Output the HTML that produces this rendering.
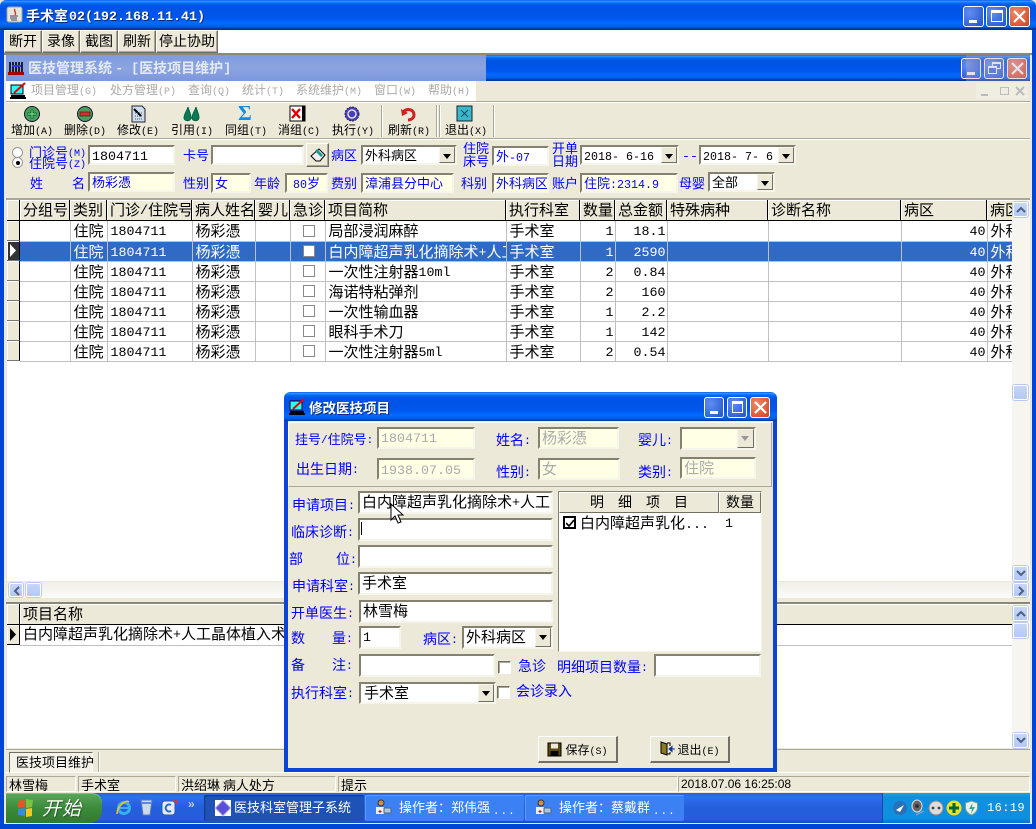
<!DOCTYPE html>
<html><head><meta charset="utf-8"><style>
html,body{margin:0;padding:0}
body{width:1036px;height:829px;overflow:hidden;position:relative;background:#ece9d8;font-family:"WenQuanYi Zen Hei","Noto Sans CJK SC",sans-serif;font-size:15px;color:#000}
body *{position:absolute;box-sizing:border-box;white-space:nowrap}
i{position:relative;top:2px;font-style:normal;font-family:"Liberation Mono",monospace;font-size:13.33px;vertical-align:top}
s{position:relative;top:3px;text-decoration:none;font-family:"Liberation Mono",monospace;font-size:10px;vertical-align:top}
.tb{background:linear-gradient(#0058ee 0,#3593ff 4%,#288eff 6%,#127dff 8%,#036ffc 10%,#0262ee 14%,#0057e5 20%,#0054e3 24%,#0055eb 56%,#005bf5 66%,#026afe 76%,#0062ef 86%,#0052d6 92%,#0040ab 94%,#003092 100%)}
.wb{width:21px;height:21px;border:1px solid #fff;border-radius:3px;background:radial-gradient(circle at 30% 30%,#5f8ff0,#2350d0)}
.wc{background:radial-gradient(circle at 30% 30%,#ec8a6a,#d4401c)}
.t{line-height:16px;height:16px}
.l{line-height:16px;height:16px;color:#00f}
.dl{font-size:14px}
.dl i{font-size:11.5px}
.btn{background:#ece9d8;border:1px solid;border-color:#fff #716f64 #716f64 #fff;box-shadow:inset -1px -1px 0 #aca899;text-align:center;line-height:21px;font-size:14px}
.f{border:2px solid;border-color:#858170 #f6f5ec #f6f5ec #858170;background:#fff;line-height:16px;padding:1px 0 0 2px;overflow:hidden}
.y{background:#ffffe6;color:#00f}
.d{background:#ffffe6;color:#aaa}
.ar{right:0;top:0;bottom:0;width:16px;background:#ece9d8;border:1px solid;border-color:#f6f5ec #716f64 #716f64 #f6f5ec}
.ar:after{content:"";position:absolute;left:3px;top:6px;border:4px solid transparent;border-top:5px solid #000;border-bottom:0}
.ar.g:after{border-top-color:#999}
.cb{width:13px;height:13px;border:1px solid;border-color:#716f64 #fff #fff #716f64;background:#fff;box-shadow:inset 1px 1px 0 #aca899}
.ti{font-size:12px;line-height:15px;height:15px}
.m{font-size:12px;color:#aaa;top:82px}
.tic{width:18px;height:18px}
.sep{width:2px;top:105px;height:32px;border-left:1px solid #aca899;border-right:1px solid #fff}
.hd{background:#ece9d8;top:200px;height:21px;line-height:19px;padding-left:3px;border-right:1px solid #000;border-bottom:1px solid #000;box-shadow:inset 1px 1px 0 #fff}
.ind{left:0;width:13px;height:20px;background:#ece9d8;border-right:1px solid #000;border-bottom:1px solid #777;box-shadow:inset 1px 1px 0 #fff}
table{border-collapse:collapse;table-layout:fixed;background:#fff}
tr,td,tbody,colgroup,col{position:static}
td{height:20px;padding:0 1px 0 3px;border-right:1px solid #c0c0c0;border-bottom:1px solid #c0c0c0;line-height:19px;overflow:hidden;box-sizing:border-box}
td.r{text-align:right}
tr.sel td{background:#316ac5;color:#fff}
.ckc{display:block;position:static;width:12px;height:12px;margin:0 auto;border:1px solid #888;background:#fff}
.sb{background:linear-gradient(#c8d6f8,#b4c8f6);border:1px solid #fff;border-radius:2px;box-shadow:0 0 0 1px #b9c9ef}
.st{top:776px;height:16px;border:1px solid;border-color:#aca899 #fff #fff #aca899;line-height:15px;font-size:13px;padding-left:2px;overflow:hidden}
.task{top:795px;height:26px;background:#3c81f3;border-radius:2px;color:#fff;line-height:24px;font-size:13px;padding-left:34px;box-shadow:inset 1px 1px 0 #5d9bf8}
.f13{font-size:13px}
.f13 i{font-size:11.67px}
</style></head><body>

<div class="tb" style="left:0;top:0;width:1036px;height:30px;border-radius:6px 6px 0 0"></div>
<div style="left:0;top:30px;width:4px;height:799px;background:#0046d5"></div>
<div style="left:1032px;top:30px;width:4px;height:799px;background:#0046d5"></div>
<div style="left:0;top:824px;width:1036px;height:5px;background:#0046d5"></div>
<svg style="left:6px;top:6px" width="17" height="18" viewBox="0 0 17 18"><rect x="1" y="1" width="15" height="15" rx="2" fill="#e7e5dc" stroke="#9aa"/><path d="M9 3c-2 2 2 3 0 6" stroke="#d33" stroke-width="1.4" fill="none"/><path d="M4 10h8M4 12h7M5 14h6" stroke="#446" stroke-width="1"/></svg>
<div class="t" style="left:26px;top:8px;color:#fff;font-weight:bold;font-size:14px;text-shadow:1px 1px 0 #0a2a80">手术室<i style="font-weight:bold;margin-left:1px">02(192.168.11.41)</i></div>
<div class="wb" style="left:963px;top:6px"><div style="left:5px;top:13px;width:8px;height:3px;background:#fff"></div></div>
<div class="wb" style="left:986px;top:6px"><div style="left:4px;top:3px;width:12px;height:12px;border:1px solid #fff;border-top-width:3px"></div></div>
<div class="wb wc" style="left:1009px;top:6px"><svg style="left:3px;top:3px" width="13" height="13"><path d="M1 1l11 11M12 1L1 12" stroke="#fff" stroke-width="2.2"/></svg></div>

<div style="left:4px;top:30px;width:1028px;height:23px;background:#fff"></div>
<div class="btn" style="left:4px;top:30px;width:38px;height:23px">断开</div>
<div class="btn" style="left:42px;top:30px;width:38px;height:23px">录像</div>
<div class="btn" style="left:80px;top:30px;width:38px;height:23px">截图</div>
<div class="btn" style="left:118px;top:30px;width:38px;height:23px">刷新</div>
<div class="btn" style="left:156px;top:30px;width:62px;height:23px">停止协助</div>

<div style="left:4px;top:53px;width:1028px;height:2px;background:#8a887c"></div>
<div class="tb" style="left:6px;top:55px;width:1024px;height:26px"></div>
<div style="left:6px;top:55px;width:480px;height:26px;background:linear-gradient(#7f9bdf,#8ba4e0 50%,#7c97de)"></div>
<svg style="left:8px;top:61px" width="16" height="14" viewBox="0 0 16 14"><rect x="0" y="11" width="16" height="3" fill="#a00"/><path d="M2 1v10M5 1v10M8 1v10M11 1v10M14 1v10" stroke="#000" stroke-width="1.6"/><path d="M4 5h9" stroke="#33f" stroke-width="2"/></svg>
<div class="t" style="left:28px;top:60px;color:#e4e9f6;font-weight:bold;font-size:14px">医技管理系统 <i style="font-weight:bold"> - [</i>医技项目维护<i style="font-weight:bold">]</i></div>
<div class="wb" style="left:961px;top:58px;width:20px"><div style="left:5px;top:13px;width:8px;height:3px;background:#fff"></div></div>
<div class="wb" style="left:984px;top:58px;width:20px"><div style="left:7px;top:3px;width:9px;height:7px;border:1px solid #fff;border-top-width:2px"></div><div style="left:3px;top:7px;width:9px;height:8px;border:1px solid #fff;border-top-width:2px;background:#3b68dc"></div></div>
<div class="wb wc" style="left:1007px;top:58px;width:20px"><svg style="left:3px;top:3px" width="13" height="13"><path d="M1 1l11 11M12 1L1 12" stroke="#fff" stroke-width="2.2"/></svg></div>
<div style="left:966px;top:55px;width:64px;height:26px;background:rgba(180,170,200,.35)"></div>

<!-- menu -->
<div style="left:6px;top:81px;width:470px;height:20px;background:#fff"></div>
<svg style="left:10px;top:82px" width="17" height="18" viewBox="0 0 17 18"><rect x="1" y="3" width="12" height="9" fill="#2ff" stroke="#000"/><path d="M4 11L15 1" stroke="#e00" stroke-width="2"/><path d="M1 14h14M0 16h16" stroke="#000" stroke-width="2"/></svg>
<div class="t m" style="left:31px">项目管理<s>(G)</s></div>
<div class="t m" style="left:110px">处方管理<s>(P)</s></div>
<div class="t m" style="left:188px">查询<s>(Q)</s></div>
<div class="t m" style="left:242px">统计<s>(T)</s></div>
<div class="t m" style="left:296px">系统维护<s>(M)</s></div>
<div class="t m" style="left:374px">窗口<s>(W)</s></div>
<div class="t m" style="left:428px">帮助<s>(H)</s></div>
<div style="left:976px;top:83px;width:52px;height:16px;background:#f0eee2"></div>
<div style="left:981px;top:94px;width:7px;height:2px;background:#bbb"></div>
<div style="left:1000px;top:87px;width:9px;height:8px;border:1px solid #bbb"></div>
<svg style="left:1015px;top:86px" width="10" height="10"><path d="M1 1l8 8M9 1L1 9" stroke="#bbb" stroke-width="2"/></svg>
<div style="left:6px;top:101px;width:1024px;height:2px;border-top:1px solid #aca899;border-bottom:1px solid #fff"></div>

<!-- toolbar -->
<svg class="tic" style="left:23px;top:105px" viewBox="0 0 18 18"><circle cx="9" cy="9" r="7.5" fill="#4aa05a" stroke="#113"/><path d="M9 4.5v9M4.5 9h9" stroke="#063" stroke-width="3"/><path d="M9 5v8M5 9h8" stroke="#9e9" stroke-width="1"/></svg>
<svg class="tic" style="left:76px;top:105px" viewBox="0 0 18 18"><circle cx="9" cy="9" r="7.5" fill="#4aa05a" stroke="#113"/><rect x="4" y="7" width="10" height="4" fill="#c33" stroke="#511" stroke-width=".7"/></svg>
<svg class="tic" style="left:129px;top:105px" viewBox="0 0 18 18"><path d="M3 1h10l3 3v13H3z" fill="#cde" stroke="#223"/><path d="M5 4l7 7" stroke="#000" stroke-width="2"/><path d="M6 8h8M6 11h8M6 14h8" stroke="#556" stroke-dasharray="1 1"/></svg>
<svg class="tic" style="left:183px;top:105px" viewBox="0 0 18 18"><path d="M5 2c-1 4-4 7-4 11 0 3 6 4 7 0 0-4-2-7-3-11zM13 2c-1 4-4 7-4 11 0 3 6 4 7 0 0-4-2-7-3-11z" fill="#0b7a55" stroke="#064"/></svg>
<div class="t" style="left:238px;top:102px;height:22px;font-size:21px;line-height:22px;color:#1a8ad8;font-weight:bold;font-family:'Liberation Serif',serif">Σ</div>
<svg class="tic" style="left:289px;top:105px" viewBox="0 0 18 18"><rect x="1" y="1" width="15" height="15" fill="#fff" stroke="#000"/><rect x="13" y="1" width="3" height="15" fill="#000"/><path d="M3 4l8 9M11 4l-8 9" stroke="#d00" stroke-width="2.4"/></svg>
<svg class="tic" style="left:343px;top:105px" viewBox="0 0 18 18"><circle cx="9" cy="9" r="7" fill="#4a3fb8" stroke="#225" stroke-dasharray="2 1"/><circle cx="9" cy="9" r="4" fill="none" stroke="#dde" stroke-width="1.5"/></svg>
<svg class="tic" style="left:400px;top:106px" viewBox="0 0 18 18"><path d="M3 6c4-4 11-3 11 3 0 3-3 5-6 5" fill="none" stroke="#c22" stroke-width="3"/><path d="M1 3l1 7 6-3z" fill="#c22"/></svg>
<svg class="tic" style="left:456px;top:105px" viewBox="0 0 18 18"><rect x="1" y="1" width="15" height="15" fill="#3bb8c8" stroke="#123"/><path d="M5 5l7 7M12 5l-7 7" stroke="#146" stroke-width="1"/></svg>
<div class="t ti" style="left:11px;top:122px">增加<s>(A)</s></div>
<div class="t ti" style="left:64px;top:122px">删除<s>(D)</s></div>
<div class="t ti" style="left:117px;top:122px">修改<s>(E)</s></div>
<div class="t ti" style="left:171px;top:122px">引用<s>(I)</s></div>
<div class="t ti" style="left:225px;top:122px">同组<s>(T)</s></div>
<div class="t ti" style="left:278px;top:122px">消组<s>(C)</s></div>
<div class="t ti" style="left:332px;top:122px">执行<s>(Y)</s></div>
<div class="sep" style="left:381px"></div>
<div class="t ti" style="left:388px;top:122px">刷新<s>(R)</s></div>
<div class="sep" style="left:436px"></div><div class="sep" style="left:439px"></div>
<div class="t ti" style="left:445px;top:122px">退出<s>(X)</s></div>
<div class="sep" style="left:493px"></div>
<div style="left:6px;top:138px;width:1024px;height:2px;border-top:1px solid #aca899;border-bottom:1px solid #fff"></div>

<!-- filter -->
<div style="left:12px;top:147px;width:11px;height:11px;border-radius:50%;background:#fff;border:1px solid #999"></div>
<div style="left:12px;top:157px;width:11px;height:11px;border-radius:50%;background:#fff;border:1px solid #999"><div style="left:3px;top:3px;width:4px;height:4px;border-radius:50%;background:#000"></div></div>
<div class="l" style="left:29px;top:144px;font-size:13px">门诊号<s>(M)</s></div>
<div class="l" style="left:29px;top:155px;font-size:13px">住院号<s>(Z)</s></div>
<div class="f" style="left:88px;top:145px;width:87px;height:20px"><i>1804711</i></div>
<div class="l" style="left:183px;top:147px;font-size:13px">卡号</div>
<div class="f" style="left:211px;top:145px;width:93px;height:20px"></div>
<div class="btn" style="left:306px;top:143px;width:23px;height:24px"><svg style="left:3px;top:3px" width="16" height="16" viewBox="0 0 16 16"><path d="M1 9l8-7 6 6-5 6H6z" fill="#eee" stroke="#000"/><path d="M7 2l6 6-2 2-6-6z" fill="#1a9a88"/></svg></div>
<div class="l" style="left:331px;top:147px;font-size:13px">病区</div>
<div class="f f13" style="left:361px;top:145px;width:96px;height:20px;padding-top:0">外科病区<div class="ar"></div></div>
<div class="l" style="left:463px;top:141px;font-size:13px;line-height:13px;height:28px;white-space:normal;width:28px">住院床号</div>
<div class="f f13" style="left:492px;top:146px;width:57px;height:20px;color:#00f;padding-top:0">外<i>-07</i></div>
<div class="l" style="left:552px;top:141px;font-size:13px;line-height:13px;height:28px;white-space:normal;width:28px">开单日期</div>
<div class="f f13" style="left:580px;top:145px;width:99px;height:20px;padding-top:0"><i>2018- 6-16</i><div class="ar"></div></div>
<div class="l" style="left:682px;top:147px;font-size:13px"><i style="font-size:13.3px">--</i></div>
<div class="f f13" style="left:699px;top:145px;width:97px;height:20px;padding-top:0"><i>2018- 7- 6</i><div class="ar"></div></div>

<div class="l" style="left:30px;top:175px;font-size:13px">姓</div>
<div class="l" style="left:72px;top:175px;font-size:13px">名</div>
<div class="f y f13" style="left:88px;top:172px;width:87px;height:20px;padding-top:0">杨彩憑</div>
<div class="l" style="left:183px;top:175px;font-size:13px">性别</div>
<div class="f y f13" style="left:211px;top:173px;width:40px;height:20px;padding-top:0">女</div>
<div class="l" style="left:254px;top:175px;font-size:13px">年龄</div>
<div class="f y f13" style="left:285px;top:173px;width:43px;height:20px;padding:0;text-align:center"><i>80</i>岁</div>
<div class="l" style="left:331px;top:175px;font-size:13px">费别</div>
<div class="f y f13" style="left:361px;top:173px;width:93px;height:20px;padding-top:0">漳浦县分中心</div>
<div class="l" style="left:461px;top:175px;font-size:13px">科别</div>
<div class="f y f13" style="left:492px;top:173px;width:57px;height:20px;padding-top:0">外科病区</div>
<div class="l" style="left:552px;top:175px;font-size:13px">账户</div>
<div class="f y f13" style="left:580px;top:173px;width:98px;height:20px;padding-top:0">住院<i>:2314.9</i></div>
<div class="l" style="left:679px;top:175px;font-size:13px">母婴</div>
<div class="f f13" style="left:708px;top:172px;width:67px;height:20px;padding-top:0">全部<div class="ar"></div></div>
<div style="left:6px;top:198px;width:1024px;height:2px;background:#aca899"></div>

<!-- grid 1 -->
<div style="left:7px;top:200px;width:1006px;height:381px;background:#fff;overflow:hidden" id="g">
<div class="hd" style="left:0;top:0;width:13px"></div>
<div class="hd" style="left:13px;top:0;width:50px">分组号</div>
<div class="hd" style="left:63px;top:0;width:37px">类别</div>
<div class="hd" style="left:100px;top:0;width:85px">门诊<i>/</i>住院号</div>
<div class="hd" style="left:185px;top:0;width:63px">病人姓名</div>
<div class="hd" style="left:248px;top:0;width:35px">婴儿</div>
<div class="hd" style="left:283px;top:0;width:35px">急诊</div>
<div class="hd" style="left:318px;top:0;width:181px">项目简称</div>
<div class="hd" style="left:499px;top:0;width:74px">执行科室</div>
<div class="hd" style="left:573px;top:0;width:35px">数量</div>
<div class="hd" style="left:608px;top:0;width:52px">总金额</div>
<div class="hd" style="left:660px;top:0;width:101px">特殊病种</div>
<div class="hd" style="left:761px;top:0;width:133px">诊断名称</div>
<div class="hd" style="left:894px;top:0;width:86px">病区</div>
<div class="hd" style="left:980px;top:0;width:40px;overflow:hidden">病区</div>
<div class="ind" style="top:21px"></div>
<div class="ind" style="top:41px;background:#333"><svg style="left:3px;top:3px" width="7" height="13"><path d="M0 0l6 6.5-6 6.5z" fill="#fff"/></svg></div>
<div class="ind" style="top:61px"></div><div class="ind" style="top:81px"></div><div class="ind" style="top:101px"></div><div class="ind" style="top:121px"></div><div class="ind" style="top:141px"></div>
<table style="left:13px;top:21px;width:1007px">
<colgroup><col style="width:50px"><col style="width:37px"><col style="width:85px"><col style="width:63px"><col style="width:35px"><col style="width:35px"><col style="width:181px"><col style="width:74px"><col style="width:35px"><col style="width:52px"><col style="width:101px"><col style="width:133px"><col style="width:86px"><col style="width:40px"></colgroup>
<tr><td></td><td>住院</td><td><i>1804711</i></td><td>杨彩憑</td><td></td><td><span class="ckc"></span></td><td>局部浸润麻醉</td><td>手术室</td><td class="r"><i>1</i></td><td class="r"><i>18.1</i></td><td></td><td></td><td class="r"><i>40</i></td><td>外科</td></tr>
<tr class="sel"><td></td><td>住院</td><td><i>1804711</i></td><td>杨彩憑</td><td></td><td><span class="ckc"></span></td><td>白内障超声乳化摘除术<i>+</i>人工</td><td>手术室</td><td class="r"><i>1</i></td><td class="r"><i>2590</i></td><td></td><td></td><td class="r"><i>40</i></td><td>外科</td></tr>
<tr><td></td><td>住院</td><td><i>1804711</i></td><td>杨彩憑</td><td></td><td><span class="ckc"></span></td><td>一次性注射器<i>10ml</i></td><td>手术室</td><td class="r"><i>2</i></td><td class="r"><i>0.84</i></td><td></td><td></td><td class="r"><i>40</i></td><td>外科</td></tr>
<tr><td></td><td>住院</td><td><i>1804711</i></td><td>杨彩憑</td><td></td><td><span class="ckc"></span></td><td>海诺特粘弹剂</td><td>手术室</td><td class="r"><i>2</i></td><td class="r"><i>160</i></td><td></td><td></td><td class="r"><i>40</i></td><td>外科</td></tr>
<tr><td></td><td>住院</td><td><i>1804711</i></td><td>杨彩憑</td><td></td><td><span class="ckc"></span></td><td>一次性输血器</td><td>手术室</td><td class="r"><i>1</i></td><td class="r"><i>2.2</i></td><td></td><td></td><td class="r"><i>40</i></td><td>外科</td></tr>
<tr><td></td><td>住院</td><td><i>1804711</i></td><td>杨彩憑</td><td></td><td><span class="ckc"></span></td><td>眼科手术刀</td><td>手术室</td><td class="r"><i>1</i></td><td class="r"><i>142</i></td><td></td><td></td><td class="r"><i>40</i></td><td>外科</td></tr>
<tr><td></td><td>住院</td><td><i>1804711</i></td><td>杨彩憑</td><td></td><td><span class="ckc"></span></td><td>一次性注射器<i>5ml</i></td><td>手术室</td><td class="r"><i>2</i></td><td class="r"><i>0.54</i></td><td></td><td></td><td class="r"><i>40</i></td><td>外科</td></tr>
</table>
</div>
<div style="left:1012px;top:200px;width:18px;height:381px;background:#f6f5ef"></div>
<div class="sb" style="left:1013px;top:202px;width:15px;height:15px"><svg style="left:2px;top:3px" width="10" height="7"><path d="M1 6l4-4 4 4" fill="none" stroke="#4d6185" stroke-width="2"/></svg></div>
<div class="sb" style="left:1013px;top:385px;width:15px;height:15px"></div>
<div class="sb" style="left:1013px;top:566px;width:15px;height:15px"><svg style="left:2px;top:3px" width="10" height="7"><path d="M1 1l4 4 4-4" fill="none" stroke="#4d6185" stroke-width="2"/></svg></div>
<div style="left:7px;top:582px;width:1023px;height:16px;background:linear-gradient(#f0efe8,#fbfbf8)"></div>
<div class="sb" style="left:9px;top:583px;width:14px;height:14px"><svg style="left:3px;top:2px" width="7" height="10"><path d="M6 1L2 5l4 4" fill="none" stroke="#4d6185" stroke-width="2"/></svg></div>
<div class="sb" style="left:26px;top:583px;width:15px;height:14px"></div>
<div class="sb" style="left:1013px;top:583px;width:15px;height:14px"><svg style="left:4px;top:2px" width="7" height="10"><path d="M1 1l4 4-4 4" fill="none" stroke="#4d6185" stroke-width="2"/></svg></div>
<div style="left:6px;top:599px;width:1024px;height:5px;background:#ece9d8;border-bottom:2px solid #8a887c"></div>

<!-- grid 2 -->
<div style="left:7px;top:604px;width:1006px;height:144px;background:#fff"></div>
<div class="hd" style="left:7px;top:604px;width:13px"></div>
<div class="hd" style="left:20px;top:604px;width:993px">项目名称</div>
<div class="ind" style="left:7px;top:625px;border-bottom:1px solid #000"><svg style="left:3px;top:3px" width="7" height="13"><path d="M0 0l6 6.5-6 6.5z" fill="#000"/></svg></div>
<div class="t" style="left:23px;top:626px;width:261px;overflow:hidden">白内障超声乳化摘除术<i>+</i>人工晶体植入术</div>
<div style="left:20px;top:645px;width:993px;height:1px;background:#c0c0c0"></div>
<div style="left:1012px;top:604px;width:18px;height:144px;background:#f6f5ef"></div>
<div class="sb" style="left:1013px;top:606px;width:15px;height:15px"><svg style="left:2px;top:3px" width="10" height="7"><path d="M1 6l4-4 4 4" fill="none" stroke="#4d6185" stroke-width="2"/></svg></div>
<div class="sb" style="left:1013px;top:623px;width:15px;height:15px"></div>
<div class="sb" style="left:1013px;top:733px;width:15px;height:15px"><svg style="left:2px;top:3px" width="10" height="7"><path d="M1 1l4 4 4-4" fill="none" stroke="#4d6185" stroke-width="2"/></svg></div>

<!-- tabs -->
<div style="left:6px;top:749px;width:1024px;height:24px;border-top:1px solid #aca899;border-bottom:1px solid #fff"></div>
<div style="left:9px;top:752px;width:84px;height:21px;background:#f4f3ea;border:1px solid;border-color:#716f64 #fff #fff #716f64;font-size:13px;line-height:18px;padding-left:6px">医技项目维护</div>
<div style="left:98px;top:752px;width:2px;height:20px;border-left:1px solid #aca899;border-right:1px solid #fff"></div>

<!-- status -->
<div class="st" style="left:6px;width:70px">林雪梅</div>
<div class="st" style="left:78px;width:98px">手术室</div>
<div class="st" style="left:178px;width:158px">洪绍琳 病人处方</div>
<div class="st" style="left:338px;width:340px">提示</div>
<div class="st" style="left:678px;width:352px"><i style="top:0;font-size:12px;font-family:'Liberation Sans',sans-serif">2018.07.06 16:25:08</i></div>

<!-- taskbar -->
<div style="left:6px;top:793px;width:1024px;height:30px;background:linear-gradient(#1f63e0,#2f6ff0 12%,#245edb 50%,#245edb 88%,#1a4cb8)"></div>
<div style="left:6px;top:793px;width:96px;height:30px;border-radius:0 10px 12px 0;background:linear-gradient(#5ba65b,#3c8c3c 50%,#2f7a2f);box-shadow:inset 0 1px 0 #84c084"></div>
<svg style="left:16px;top:798px" width="20" height="20" viewBox="0 0 20 20"><path d="M2 3l7-2v8l-7 1z" fill="#e8532a"/><path d="M10 1l7 1-1 7-6 1z" fill="#7cc23c"/><path d="M2 11l7-1v8l-7-1z" fill="#3a8ae0"/><path d="M10 11l6-1v8l-6 1z" fill="#f6c822"/></svg>
<div class="t" style="left:42px;top:797px;height:22px;font-size:19px;line-height:22px;color:#fff;font-style:italic;letter-spacing:1px;text-shadow:1px 1px 1px #2a5a2a">开始</div>
<svg style="left:115px;top:799px" width="18" height="18" viewBox="0 0 18 18"><circle cx="9" cy="9" r="5.5" fill="none" stroke="#3ab0f0" stroke-width="3"/><path d="M4 9h10" stroke="#3ab0f0" stroke-width="2"/><path d="M14 3C10 0 2 8 2 15" stroke="#f4c020" stroke-width="1.6" fill="none"/></svg>
<svg style="left:139px;top:799px" width="15" height="18" viewBox="0 0 15 18"><path d="M2 1h11l-2 15H4z" fill="#cdd9ea" stroke="#5a7ab0"/><path d="M3 4h9" stroke="#5a8ae0" stroke-width="2"/></svg>
<svg style="left:160px;top:799px" width="18" height="18" viewBox="0 0 18 18"><rect x="2" y="2" width="13" height="14" rx="3" fill="#e4ecf8" stroke="#2a5ab0"/><path d="M11 6a3.5 3.5 0 1 0 0 6" stroke="#2a6ad0" stroke-width="2" fill="none"/><path d="M13 2h4v3" stroke="#d33" stroke-width="1.4" fill="none"/></svg>
<div class="t" style="left:188px;top:796px;color:#b8d0f8;font-size:12px;font-weight:bold;font-family:'Liberation Sans',sans-serif">»</div>
<div class="task" style="left:204px;width:160px;background:#1e52b7;box-shadow:inset 1px 1px 1px #14397f;padding-left:30px">医技科室管理子系统</div>
<div style="left:215px;top:800px;width:16px;height:16px;background:#fff"></div>
<div style="left:217px;top:802px;width:12px;height:12px;background:#5a50d8;transform:rotate(45deg);border:1px solid #c8c4f4"></div>
<div class="task" style="left:365px;width:159px">操作者：郑伟强 <i style="font-size:11px;letter-spacing:1px;top:5px">...</i></div>
<div class="task" style="left:525px;width:159px">操作者：蔡戴群 <i style="font-size:11px;letter-spacing:1px;top:5px">...</i></div>
<svg style="left:374px;top:799px" width="18" height="18" viewBox="0 0 18 18"><circle cx="7" cy="4" r="3" fill="#c89060" stroke="#432"/><rect x="2" y="8" width="8" height="7" fill="#eee"/><rect x="10" y="9" width="7" height="5" fill="#a8c8e8" stroke="#567"/><path d="M6 11v3M4.5 12.500h3" stroke="#d00"/></svg>
<svg style="left:534px;top:799px" width="18" height="18" viewBox="0 0 18 18"><circle cx="7" cy="4" r="3" fill="#c89060" stroke="#432"/><rect x="2" y="8" width="8" height="7" fill="#eee"/><rect x="10" y="9" width="7" height="5" fill="#a8c8e8" stroke="#567"/><path d="M6 11v3M4.5 12.500h3" stroke="#d00"/></svg>
<div style="left:882px;top:793px;width:148px;height:30px;background:linear-gradient(#12a4ea,#0f8fe0 15%,#0f8fe0 85%,#0c70c8);border-left:1px solid #0a4ca0"></div>
<svg style="left:892px;top:800px" width="16" height="16"><circle cx="8" cy="8" r="7" fill="#2a70b8"/><path d="M4 10l8-5-4 7z" fill="#fff"/></svg>
<svg style="left:910px;top:799px" width="16" height="18"><ellipse cx="7" cy="7" rx="5" ry="6" fill="#666" stroke="#ddd"/><circle cx="7" cy="7" r="2" fill="#333"/><path d="M6 16l8-4" stroke="#9ab" stroke-width="1"/></svg>
<svg style="left:928px;top:800px" width="16" height="16"><circle cx="8" cy="8" r="7" fill="#ddd" stroke="#888"/><circle cx="5" cy="8" r="1.4" fill="#444"/><circle cx="11" cy="8" r="1.4" fill="#444"/></svg>
<svg style="left:946px;top:800px" width="16" height="16"><circle cx="8" cy="8" r="7.500" fill="#ece020"/><path d="M8 3v10M3 8h10" stroke="#063" stroke-width="3"/></svg>
<svg style="left:964px;top:800px" width="15" height="16"><path d="M7.500 1l6 2v5c0 3-3 6-6 7-3-1-6-4-6-7V3z" fill="#eee" stroke="#6a8"/><path d="M8.500 3L5 9h3l-1 5 4-7H8z" fill="#3a8"/></svg>
<div class="t" style="left:987px;top:800px;color:#fff;font-size:12px;font-family:'Liberation Mono',monospace;letter-spacing:.4px">16:19</div>

<!-- dialog -->
<div class="tb" style="left:284px;top:392px;width:493px;height:30px;border-radius:6px 6px 0 0"></div>
<div style="left:284px;top:421px;width:493px;height:351px;background:#ece9d8;border:4px solid #0a45d8;border-top:0"></div>
<svg style="left:289px;top:398px" width="17" height="18" viewBox="0 0 17 18"><rect x="1" y="3" width="12" height="9" fill="#2ff" stroke="#000"/><path d="M4 11L15 1" stroke="#e00" stroke-width="2"/><path d="M1 14h14M0 16h16" stroke="#000" stroke-width="2"/></svg>
<div class="t" style="left:309px;top:399px;color:#fff;font-weight:bold;font-size:13.5px;text-shadow:1px 1px 0 #0a2a80">修改医技项目</div>
<div class="wb" style="left:704px;top:397px;width:20px"><div style="left:5px;top:13px;width:8px;height:3px;background:#fff"></div></div>
<div class="wb" style="left:727px;top:397px;width:20px"><div style="left:4px;top:3px;width:11px;height:12px;border:1px solid #fff;border-top-width:3px"></div></div>
<div class="wb wc" style="left:750px;top:397px;width:20px"><svg style="left:3px;top:3px" width="13" height="13"><path d="M1 1l11 11M12 1L1 12" stroke="#fff" stroke-width="2.2"/></svg></div>
<div style="left:288px;top:422px;width:484px;height:65px;border:1px solid;border-color:#fff #aca899 #aca899 #fff"></div>

<div class="l" style="left:295px;top:431px;font-size:13px"><span style="position:static">挂号</span><i style="font-size:11px">/</i>住院号<i style="font-size:11px">:</i></div>
<div class="f d" style="left:377px;top:427px;width:98px;height:22px"><i>1804711</i></div>
<div class="l dl" style="left:496px;top:432px">姓名<i>:</i></div>
<div class="f d" style="left:538px;top:427px;width:81px;height:22px">杨彩憑</div>
<div class="l dl" style="left:638px;top:432px">婴儿<i>:</i></div>
<div class="f d" style="left:680px;top:427px;width:76px;height:23px"><div class="ar g" style="width:17px"></div></div>
<div class="l dl" style="left:296px;top:461px">出生日期<i>:</i></div>
<div class="f d" style="left:377px;top:458px;width:98px;height:22px;padding-top:2px"><i>1938.07.05</i></div>
<div class="l dl" style="left:496px;top:464px">性别<i>:</i></div>
<div class="f d" style="left:538px;top:458px;width:82px;height:22px">女</div>
<div class="l dl" style="left:638px;top:464px">类别<i>:</i></div>
<div class="f d" style="left:680px;top:457px;width:76px;height:22px">住院</div>

<div class="l dl" style="left:292px;top:497px">申请项目<i>:</i></div>
<div class="f" style="left:358px;top:491px;width:195px;height:23px;padding-top:1px">白内障超声乳化摘除术<i>+</i>人工</div>
<div class="l dl" style="left:291px;top:524px">临床诊断<i>:</i></div>
<div class="f" style="left:358px;top:518px;width:195px;height:23px"><div style="left:1px;top:2px;width:1px;height:13px;background:#000"></div></div>
<div class="l dl" style="left:289px;top:551px">部</div><div class="l dl" style="left:336px;top:551px">位<i>:</i></div>
<div class="f" style="left:358px;top:545px;width:195px;height:23px"></div>
<div class="l dl" style="left:292px;top:578px">申请科室<i>:</i></div>
<div class="f" style="left:358px;top:572px;width:195px;height:23px">手术室</div>
<div class="l dl" style="left:291px;top:605px">开单医生<i>:</i></div>
<div class="f" style="left:359px;top:600px;width:194px;height:23px">林雪梅</div>
<div class="l dl" style="left:291px;top:630px">数</div><div class="l dl" style="left:332px;top:630px">量<i>:</i></div>
<div class="f" style="left:359px;top:626px;width:42px;height:23px"><i>1</i></div>
<div class="l dl" style="left:423px;top:631px">病区<i>:</i></div>
<div class="f" style="left:462px;top:626px;width:91px;height:23px">外科病区<div class="ar"></div></div>
<div class="l dl" style="left:291px;top:657px">备</div><div class="l dl" style="left:332px;top:657px">注<i>:</i></div>
<div class="f" style="left:359px;top:654px;width:136px;height:23px"></div>
<div class="cb" style="left:498px;top:661px"></div>
<div class="l dl" style="left:518px;top:658px">急诊</div>
<div class="l dl" style="left:557px;top:659px">明细项目数量<i>:</i></div>
<div class="f" style="left:654px;top:654px;width:107px;height:23px"></div>
<div class="l dl" style="left:291px;top:685px">执行科室<i>:</i></div>
<div class="f" style="left:359px;top:682px;width:137px;height:22px;padding-left:3px">手术室<div class="ar"></div></div>
<div class="cb" style="left:497px;top:686px"></div>
<div class="l dl" style="left:516px;top:683px">会诊录入</div>

<div style="left:558px;top:491px;width:204px;height:161px;background:#fff;border:1px solid;border-color:#858170 #f6f5ec #f6f5ec #858170"></div>
<div style="left:559px;top:492px;width:160px;height:21px;background:#ece9d8;border:1px solid;border-color:#fff #716f64 #716f64 #fff;text-align:center;line-height:18px;font-size:14px">明　细　项　目</div>
<div style="left:719px;top:492px;width:42px;height:21px;background:#ece9d8;border:1px solid;border-color:#fff #716f64 #716f64 #fff;text-align:center;line-height:18px;font-size:14px">数量</div>
<div style="left:563px;top:516px;width:13px;height:13px;background:#fff;border:2px solid #000"><svg style="left:1px;top:1px" width="8" height="8"><path d="M0 4l3 3 5-6" stroke="#000" stroke-width="1.6" fill="none"/></svg></div>
<div class="t" style="left:580px;top:515px">白内障超声乳化<i style="top:3px">...</i></div>
<div class="t" style="left:725px;top:515px"><i>1</i></div>

<div class="btn" style="left:538px;top:736px;width:80px;height:27px;line-height:25px;padding-left:18px;font-size:12px;border-width:1px 2px 2px 1px;box-shadow:none">保存<s>(S)</s><svg style="left:8px;top:5px" width="15" height="15" viewBox="0 0 15 15"><rect x="1" y="1" width="13" height="13" fill="#5a4a10" stroke="#000"/><rect x="4" y="1.500" width="7" height="5" fill="#ece9d8"/><rect x="3.500" y="9" width="8" height="5" fill="#000"/></svg></div>
<div class="btn" style="left:650px;top:736px;width:80px;height:27px;line-height:25px;padding-left:18px;font-size:12px;border-width:1px 2px 2px 1px;box-shadow:none">退出<s>(E)</s><svg style="left:9px;top:4px" width="16" height="16" viewBox="0 0 16 16"><path d="M1 1l6 2v11l-6-2z" fill="#8a7a20" stroke="#000"/><path d="M7 2h3v3M7 13h3v-2" stroke="#000" fill="none"/><path d="M15 8H11M12 5.500L9 8l3 2.500z" fill="#13a" stroke="#13a"/></svg></div>

<svg style="left:390px;top:503px" width="14" height="21" viewBox="0 0 14 21"><path d="M1 1v16l4-4 3 7 3-1-3-7h5z" fill="#fff" stroke="#000"/></svg>
</body></html>
